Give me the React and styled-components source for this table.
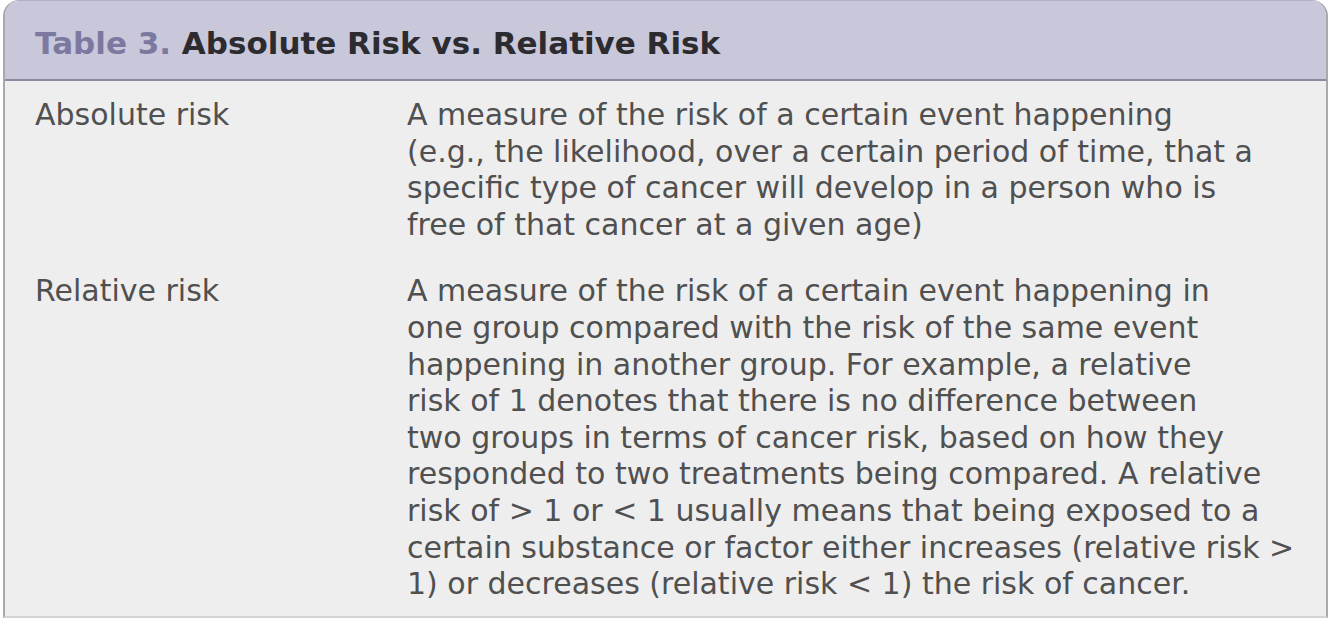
import React from 'react'
import styled, { createGlobalStyle } from 'styled-components'

const Global = createGlobalStyle`
  html, body {
    margin: 0;
    padding: 0;
    background: #ffffff;
  }
  body {
    font-family: "DejaVu Sans", "Liberation Sans", sans-serif;
  }
`

const Panel = styled.div`
  width: 1321px;
  height: 615px;
  margin-left: 3px;
  display: flex;
  flex-direction: column;
  background: #eeeeee;
  border: 2px solid #a9a9ad;
  border-top: 1px solid #b3b1c6;
  border-bottom-color: #d4d4d4;
  border-radius: 16px 16px 0 0;
  overflow: hidden;
`

const Header = styled.div`
  height: 80px;
  flex-shrink: 0;
  display: flex;
  align-items: center;
  padding: 5px 0 0 30px;
  box-sizing: border-box;
  background: #c9c7da;
  border-bottom: 2px solid #8c8aa2;
`

const Title = styled.h1`
  margin: 0;
  font-size: 31px;
  font-weight: 700;
  color: #2b2b30;
  white-space: pre;
`

const Label = styled.span`
  color: #7c79a0;
`

const Body = styled.div`
  padding: 16px 0 0 30px;
  display: flex;
  flex-direction: column;
  gap: 30px;
`

const Row = styled.div`
  display: grid;
  grid-template-columns: 372px 1fr;
  font-size: 30px;
  line-height: 36.6px;
  color: #505050;
`

const Term = styled.div`
  white-space: nowrap;
`

const Line = styled.div`
  white-space: nowrap;
`

const rows = [
  {
    term: 'Absolute risk',
    lines: [
      'A measure of the risk of a certain event happening',
      '(e.g., the likelihood, over a certain period of time, that a',
      'specific type of cancer will develop in a person who is',
      'free of that cancer at a given age)',
    ],
  },
  {
    term: 'Relative risk',
    lines: [
      'A measure of the risk of a certain event happening in',
      'one group compared with the risk of the same event',
      'happening in another group. For example, a relative',
      'risk of 1 denotes that there is no difference between',
      'two groups in terms of cancer risk, based on how they',
      'responded to two treatments being compared. A relative',
      'risk of > 1 or < 1 usually means that being exposed to a',
      'certain substance or factor either increases (relative risk >',
      '1) or decreases (relative risk < 1) the risk of cancer.',
    ],
  },
]

export default function App() {
  return (
    <>
      <Global />
      <Panel>
        <Header>
          <Title>
            <Label>Table 3.</Label> Absolute Risk vs. Relative Risk
          </Title>
        </Header>
        <Body>
          {rows.map((r) => (
            <Row key={r.term}>
              <Term>{r.term}</Term>
              <div>
                {r.lines.map((l, i) => (
                  <Line key={i}>{l}</Line>
                ))}
              </div>
            </Row>
          ))}
        </Body>
      </Panel>
    </>
  )
}
